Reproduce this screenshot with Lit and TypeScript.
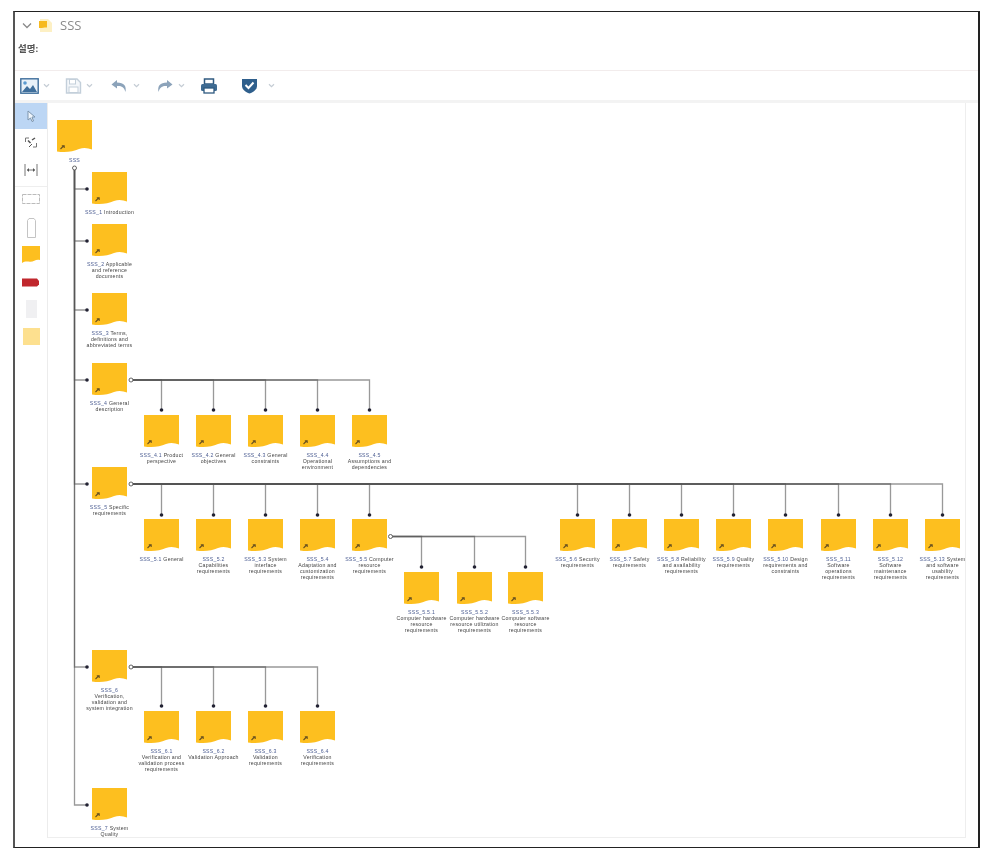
import { LitElement, html, css, svg } from "lit";
import { customElement } from "lit/decorators.js";

type N = { x: number; y: number; id: string; lines: string[] };

const node = (x: number, y: number, id: string, ...lines: string[]): N => ({ x, y, id, lines });

const CX = 48;
const CY = 103;

const root = node(57, 120, "SSS");
const top = [
  node(92, 172, "SSS_1", "Introduction"),
  node(92, 224, "SSS_2", "Applicable", "and reference", "documents"),
  node(92, 293, "SSS_3", "Terms,", "definitions and", "abbreviated terms"),
  node(92, 363, "SSS_4", "General", "description"),
  node(92, 467, "SSS_5", "Specific", "requirements"),
  node(92, 650, "SSS_6", "", "Verification,", "validation and", "system integration"),
  node(92, 788, "SSS_7", "System", "Quality"),
];
const s4 = [
  node(144, 415, "SSS_4.1", "Product", "perspective"),
  node(196, 415, "SSS_4.2", "General", "objectives"),
  node(248, 415, "SSS_4.3", "General", "constraints"),
  node(300, 415, "SSS_4.4", "", "Operational", "environment"),
  node(352, 415, "SSS_4.5", "", "Assumptions and", "dependencies"),
];
const s5 = [
  node(144, 519, "SSS_5.1", "General"),
  node(196, 519, "SSS_5.2", "", "Capabilities", "requirements"),
  node(248, 519, "SSS_5.3", "System", "interface", "requirements"),
  node(300, 519, "SSS_5.4", "", "Adaptation and", "customization", "requirements"),
  node(352, 519, "SSS_5.5", "Computer", "resource", "requirements"),
  node(560, 519, "SSS_5.6", "Security", "requirements"),
  node(612, 519, "SSS_5.7", "Safety", "requirements"),
  node(664, 519, "SSS_5.8", "Reliability", "and availability", "requirements"),
  node(716, 519, "SSS_5.9", "Quality", "requirements"),
  node(768, 519, "SSS_5.10", "Design", "requirements and", "constraints"),
  node(821, 519, "SSS_5.11", "", "Software", "operations", "requirements"),
  node(873, 519, "SSS_5.12", "", "Software", "maintenance", "requirements"),
  node(925, 519, "SSS_5.13", "System", "and software", "usability", "requirements"),
];
const s55 = [
  node(404, 572, "SSS_5.5.1", "", "Computer hardware", "resource", "requirements"),
  node(457, 572, "SSS_5.5.2", "", "Computer hardware", "resource utilization", "requirements"),
  node(508, 572, "SSS_5.5.3", "", "Computer software", "resource", "requirements"),
];
const s6 = [
  node(144, 711, "SSS_6.1", "", "Verification and", "validation process", "requirements"),
  node(196, 711, "SSS_6.2", "", "Validation Approach"),
  node(248, 711, "SSS_6.3", "", "Validation", "requirements"),
  node(300, 711, "SSS_6.4", "", "Verification", "requirements"),
];

const allNodes = [root, ...top, ...s4, ...s5, ...s55, ...s6];

type Branch = { cx: number; cy: number; kids: N[]; tip: number };
const branches: Branch[] = [
  { cx: 131, cy: 380, kids: s4, tip: 410 },
  { cx: 131, cy: 484, kids: s5, tip: 515 },
  { cx: 390.5, cy: 536.5, kids: s55, tip: 567 },
  { cx: 131, cy: 667, kids: s6, tip: 706 },
];

const TRUNK_X = 74.5;
const TRUNK_Y = 168;

@customElement("app-root")
export class AppRoot extends LitElement {
  static styles = css`
    :host {
      display: block;
      width: 990px;
      height: 858px;
      background: #fff;
      font-family: "Open Sans", "Noto Sans", "Noto Sans CJK KR", sans-serif;
      overflow: hidden;
    }
    .frame {
      box-sizing: border-box;
      width: 967px;
      height: 837px;
      margin: 11px 0 0 13px;
      border: 1px solid #222;
      border-left: 2px solid #555;
      border-right: 2px solid #222;
    }
    .inner {
      height: 100%;
      display: flex;
      flex-direction: column;
      filter: blur(0.7px);
    }
    .title {
      height: 24px;
      margin-top: 1px;
      display: flex;
      align-items: center;
      gap: 7px;
      padding-left: 7px;
      font-size: 13px;
      color: #8a8a8a;
      flex: none;
    }
    .title .name { margin-left: 1px; }
    .desc {
      height: 32px;
      padding-left: 3px;
      padding-top: 5px;
      box-sizing: border-box;
      font-size: 9.5px;
      font-weight: 700;
      line-height: 14px;
      color: #555;
      flex: none;
    }
    .toolbar {
      height: 33px;
      box-sizing: border-box;
      margin-top: 1px;
      border-top: 1px solid #f2ecec;
      border-bottom: 3px solid #f3f3f3;
      display: flex;
      align-items: center;
      padding-left: 5px;
      flex: none;
    }
    .tb {
      display: flex;
      align-items: center;
      gap: 4px;
      height: 18px;
    }
    .caret { color: #c4ccd4; }
    .body {
      flex: 1;
      min-height: 0;
      display: flex;
      padding: 0 12px 9px 0;
    }
    .side {
      width: 32px;
      flex: none;
      display: flex;
      flex-direction: column;
      align-items: center;
      border-right: 1px solid #ececec;
    }
    .tool {
      width: 100%;
      height: 27px;
      display: flex;
      align-items: center;
      justify-content: center;
      flex: none;
    }
    .tool.on { background: #bcd6f4; height: 26px; }
    .sep { width: 100%; height: 1px; background: #eee; margin: 3px 0 7px; flex: none; }
    .shape { display: block; flex: none; }
    .canvas {
      position: relative;
      flex: 1;
      min-width: 0;
      border-right: 1px solid #eee;
      border-bottom: 1px solid #eee;
      overflow: hidden;
    }
    .edges { position: absolute; left: 0; top: 0; }
    .node {
      position: absolute;
      width: 35px;
      height: 34px;
    }
    .node svg { display: block; }
    .label {
      position: absolute;
      left: 50%;
      top: 37px;
      transform: translateX(-50%);
      width: max-content;
      text-align: center;
      font-family: "Liberation Sans", Arial, sans-serif;
      font-size: 5.2px;
      letter-spacing: 0.25px;
      line-height: 6px;
      color: #444;
      white-space: nowrap;
    }
    .label .id { color: #4f6094; }
  `;

  private caret() {
    return html`<svg class="caret" width="7" height="5" viewBox="0 0 7 5"><path d="M1 1.2 3.5 3.6 6 1.2" fill="none" stroke="currentColor" stroke-width="1.2"/></svg>`;
  }

  private toolbar() {
    return html`<div class="toolbar">
      <div class="tb" style="width:45px">
        <svg width="19" height="16" viewBox="0 0 19 16"><rect x=".8" y=".8" width="17.4" height="14.4" fill="#e8f1f8" stroke="#3f6f9c" stroke-width="1.4"/><circle cx="5" cy="5" r="1.8" fill="#5b9bd0"/><path d="M2 14 7 8l3 3 3-4 4 7z" fill="#3f6f9c"/></svg>
        ${this.caret()}
      </div>
      <div class="tb" style="width:45px">
        <svg width="17" height="16" viewBox="0 0 17 16"><path d="M1.5 1h10.5l3.5 3.5V15h-14z" fill="#f4f7fa" stroke="#c3cfda" stroke-width="1.4"/><rect x="4.5" y="1.5" width="6" height="4.5" fill="#fff" stroke="#c3cfda"/><rect x="4" y="9" width="9" height="5.5" fill="#fff" stroke="#c3cfda"/></svg>
        ${this.caret()}
      </div>
      <div class="tb" style="width:45px">
        <svg width="19" height="14" viewBox="0 0 19 14"><path d="M7 1 1.5 5.5 7 9.5V7c4-.3 7 .5 8.5 6 1.2-6-1.5-9.5-8.5-9.5z" fill="#8ca3ba"/></svg>
        ${this.caret()}
      </div>
      <div class="tb" style="width:45px">
        <svg width="19" height="14" viewBox="0 0 19 14"><path d="M12 1l5.5 4.5L12 9.500V7c-4-.3-7 .5-8.500 6C2.300 7 5 3.500 12 3.500z" fill="#8ca3ba"/></svg>
        ${this.caret()}
      </div>
      <div class="tb" style="width:41px">
        <svg width="18" height="16" viewBox="0 0 18 16"><rect x="4.500" y="1" width="9" height="5" fill="#fff" stroke="#2f5a80" stroke-width="1.500"/><rect x="1" y="6" width="16" height="7" rx="1.500" fill="#3f6b92"/><rect x="4" y="10" width="10" height="5" fill="#fff" stroke="#2f5a80" stroke-width="1.300"/></svg>
      </div>
      <div class="tb">
        <svg width="17" height="17" viewBox="0 0 17 17"><path d="M1 2h15v7c0 3.500-3.500 6-7.500 7.500C4.500 15 1 12.500 1 9z" fill="#2f5f8c"/><path d="M4.500 8 7.500 11 12.500 5.500" fill="none" stroke="#fff" stroke-width="2"/></svg>
        <span style="width:2px"></span>
        ${this.caret()}
      </div>
    </div>`;
  }

  private sidebar() {
    return html`<div class="side">
      <div class="tool on">
        <svg width="11" height="12" viewBox="0 0 11 12"><path d="M2 1l7 6H6l1.500 4-1.500.5L4.500 8 2 10z" fill="#eef5fc" stroke="#7d95ad"/></svg>
      </div>
      <div class="tool">
        <svg width="14" height="13" viewBox="0 0 14 13"><path d="M1.500 6V2H5M9 11h3.500V7" fill="none" stroke="#777"/><path d="M4 4.500 6.500 7M8 4l3-2" stroke="#555" stroke-width="1.500"/><path d="M5 11 8 8" stroke="#555"/></svg>
      </div>
      <div class="tool">
        <svg width="14" height="14" viewBox="0 0 14 14"><path d="M1 1v12M13 1v12M3 7h8" fill="none" stroke="#777"/><path d="M3 7l2-2v4zM11 7 9 5v4z" fill="#555"/></svg>
      </div>
      <div class="sep"></div>
      <svg class="shape" width="18" height="10" viewBox="0 0 18 10" style="margin-bottom:14px"><rect x=".5" y=".5" width="17" height="9" fill="#fff" stroke="#bbb" stroke-dasharray="4 1"/></svg>
      <svg class="shape" width="9" height="20" viewBox="0 0 9 20" style="margin-bottom:8px"><path d="M.5 2.500 2 .5h5l1.500 2V19.500H.5z" fill="#fff" stroke="#c4c4c4"/></svg>
      <svg class="shape" width="18" height="17" viewBox="0 0 18 17" style="margin-bottom:15px"><path d="M0 0h18v14c-4-1.500-6 2-10 1.800C5 15.600 3 15 0 17z" fill="#fdbf1f"/></svg>
      <svg class="shape" width="18" height="9" viewBox="0 0 18 9" style="margin-bottom:13px"><path d="M0 .5h15L17 3v3.500L15 8.500H0z" fill="#c0272d"/></svg>
      <div class="shape" style="width:11px;height:18px;background:#f0f0f2;margin-bottom:10px"></div>
      <div class="shape" style="width:17px;height:17px;background:#fde08f"></div>
    </div>`;
  }

  private nodeEl(n: N) {
    return html`<div class="node" style="left:${n.x - CX}px;top:${n.y - CY}px">
      <svg width="35" height="34" viewBox="0 0 35 34">
        <path d="M0 0H35V29.500C31 28 27 27 22 29 16 31.500 9 33 0 31.500Z" fill="#fdbf1f"/>
        <path d="M3.500 29 7 25.500M4.800 25.800H7.200V28" fill="none" stroke="#6b5320" stroke-width="1.100"/>
      </svg>
      <div class="label">
        <span class="id">${n.id}</span>${n.lines.length && n.lines[0] ? " " + n.lines[0] : ""}
        ${n.lines.slice(1).map((l) => html`<br />${l}`)}
      </div>
    </div>`;
  }

  private edges() {
    const ends: { x: number; y: number }[] = [];
    const paths: string[] = [];
    for (const t of top) {
      const cy = t.y + 17;
      paths.push(`M${TRUNK_X} ${TRUNK_Y}V${cy}H${t.x - 5}`);
      ends.push({ x: t.x - 5, y: cy });
    }
    for (const b of branches) {
      for (const k of b.kids) {
        const kx = k.x + 17.5;
        paths.push(`M${b.cx} ${b.cy}H${kx}V${b.tip}`);
        ends.push({ x: kx, y: b.tip });
      }
    }
    const circles = [{ x: TRUNK_X, y: TRUNK_Y }, ...branches.map((b) => ({ x: b.cx, y: b.cy }))];
    return html`<svg class="edges" width="918" height="734" viewBox="${CX} ${CY} 918 734">
      ${paths.map((d) => svg`<path d=${d} fill="none" stroke="#555" stroke-opacity=".6" stroke-width="1.300"/>`)}
      ${ends.map((e) => svg`<circle cx=${e.x} cy=${e.y} r="1.800" fill="#223"/>`)}
      ${circles.map((c) => svg`<circle cx=${c.x} cy=${c.y} r="2" fill="#fff" stroke="#555" stroke-width=".9"/>`)}
    </svg>`;
  }

  render() {
    return html`<div class="frame"><div class="inner">
      <div class="title">
        <svg width="10" height="7" viewBox="0 0 10 7"><path d="M1 1.500 5 5.500 9 1.500" fill="none" stroke="#8a8a8a" stroke-width="1.300"/></svg>
        <svg width="13" height="13" viewBox="0 0 13 13"><path d="M1 0h8l4 4v9H1z" fill="#fdf0c4"/><path d="M0 2h8v6.500C6 8 3 9.500 0 9z" fill="#f6b91f"/></svg>
        <span class="name">SSS</span>
      </div>
      <div class="desc">설명:</div>
      ${this.toolbar()}
      <div class="body">
        ${this.sidebar()}
        <div class="canvas">
          ${this.edges()}
          ${allNodes.map((n) => this.nodeEl(n))}
        </div>
      </div>
    </div></div>`;
  }
}
